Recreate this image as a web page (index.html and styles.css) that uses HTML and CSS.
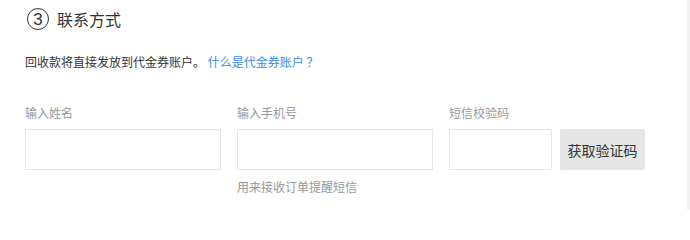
FILE: index.html
```html
<!DOCTYPE html>
<html lang="zh-CN">
<head>
<meta charset="utf-8">
<title>联系方式</title>
<link rel="stylesheet" href="styles.css">
</head>
<body>
<div class="panel">
  <div class="title">
    <span class="step">3</span>
    <span class="title-text">联系方式</span>
  </div>
  <p class="desc">回收款将直接发放到代金券账户。 <a class="link" href="#">什么是代金券账户 ？</a></p>
  <div class="fields">
    <div class="field field-name">
      <label class="label">输入姓名</label>
      <input class="input" type="text">
    </div>
    <div class="field field-phone">
      <label class="label">输入手机号</label>
      <input class="input" type="text">
      <div class="hint">用来接收订单提醒短信</div>
    </div>
    <div class="field field-code">
      <label class="label">短信校验码</label>
      <div class="code-row">
        <input class="input input-code" type="text">
        <button class="btn" type="button">获取验证码</button>
      </div>
    </div>
  </div>
</div>
</body>
</html>
```
FILE: styles.css
```css
html, body {
  margin: 0;
  padding: 0;
  background: #fff;
}
body {
  font-family: "Noto Sans CJK SC", "Noto Sans", sans-serif;
  color: #333;
}
.panel {
  box-sizing: border-box;
  width: 690px;
  height: 210px;
  padding: 8px 0 0 25px;
  border-right: 3px solid #f2f2f2;
}
.title {
  display: flex;
  align-items: center;
  height: 22px;
}
.step {
  box-sizing: border-box;
  width: 22px;
  height: 22px;
  margin-left: 2px;
  border: 1px solid #333;
  border-radius: 50%;
  display: flex;
  align-items: center;
  justify-content: center;
  font-family: "Liberation Sans", sans-serif;
  font-size: 17px;
  line-height: 1;
  color: #333;
}
.title-text {
  margin-left: 8px;
  font-size: 16px;
  line-height: 22px;
  color: #333;
}
.desc {
  margin: 23px 0 0;
  font-size: 12px;
  line-height: 18px;
  color: #333;
}
.link {
  color: #3a8ee6;
  text-decoration: none;
}
.fields {
  display: flex;
  gap: 16px;
  margin-top: 33px;
}
.field {
  display: flex;
  flex-direction: column;
}
.field-name { width: 196px; }
.field-phone { width: 196px; }
.label {
  font-size: 12px;
  line-height: 18px;
  color: #999;
  margin-bottom: 7px;
}
.input {
  box-sizing: border-box;
  width: 100%;
  height: 41px;
  margin: 0;
  border: 1px solid #e6e6e6;
  border-radius: 0;
  background: #fff;
  outline: none;
}
.hint {
  margin-top: 8px;
  font-size: 12px;
  line-height: 18px;
  color: #999;
}
.code-row {
  display: flex;
  gap: 8px;
}
.input-code {
  width: 103px;
}
.btn {
  box-sizing: border-box;
  width: 85px;
  height: 41px;
  margin: 0;
  padding: 0;
  border: none;
  border-radius: 2px;
  background: #e6e6e6;
  color: #333;
  font-family: "Noto Sans CJK SC", sans-serif;
  font-size: 14px;
}
```
